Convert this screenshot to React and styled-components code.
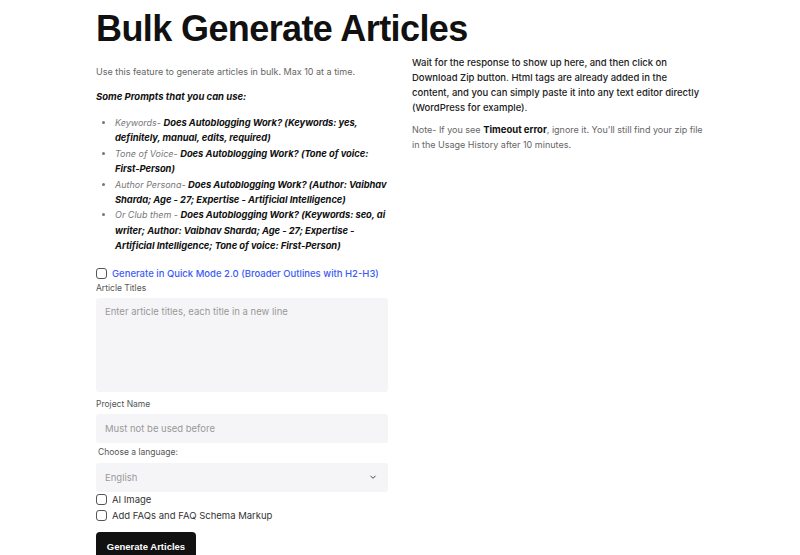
import React from "react";
import styled, { createGlobalStyle } from "styled-components";

const GlobalStyle = createGlobalStyle`
  html, body {
    margin: 0;
    padding: 0;
    background: #ffffff;
  }
  body {
    font-family: Inter, "Noto Sans", sans-serif;
    color: #222;
  }
  * {
    box-sizing: border-box;
  }
`;

const Page = styled.div`
  width: 608px;
  margin: 0 auto;
  padding-top: 7px;
`;

const Title = styled.h1`
  margin: 0;
  font-family: "Liberation Sans", Arial, sans-serif;
  font-size: 36px;
  font-weight: 700;
  letter-spacing: -0.6px;
  line-height: 44px;
  color: #111;
`;

const Columns = styled.div`
  display: grid;
  grid-template-columns: 292px 292px;
  column-gap: 24px;
  align-items: start;
`;

const Column = styled.div`
  display: flex;
  flex-direction: column;
`;

const Text = styled.p`
  margin: ${(p) => p.$margin || "0"};
  font-size: ${(p) => (p.$dark ? "9.5px" : "9px")};
  line-height: 15px;
  color: ${(p) => (p.$dark ? "#222" : "#666")};
  font-weight: ${(p) => (p.$dark ? 500 : 400)};
  font-style: ${(p) => (p.$italic ? "italic" : "normal")};
`;

const Strong = styled.strong`
  font-weight: 700;
  font-size: 9.5px;
  color: #111;
`;

const PromptList = styled.ul`
  margin: 11px 0 12px;
  padding-left: 19px;
  font-size: 9px;
  line-height: 15.4px;
  font-style: italic;
`;

const PromptItem = styled.li`
  color: #777;
  strong {
    color: #111;
    font-size: 9.4px;
    letter-spacing: -0.05px;
  }
`;

const CheckRow = styled.label`
  display: flex;
  align-items: center;
  gap: 5px;
  height: 16px;
  font-size: 9.5px;
  color: ${(p) => (p.$accent ? "#3d5cf5" : "#333")};
  font-weight: ${(p) => (p.$accent ? 500 : 400)};
`;

const Box = styled.span`
  width: 11px;
  height: 11px;
  border: 1px solid #555;
  border-radius: 3px;
  flex-shrink: 0;
`;

const FieldLabel = styled.div`
  font-size: 8.5px;
  line-height: 12px;
  color: #555;
  margin: ${(p) => p.$margin || "0"};
  padding-left: ${(p) => (p.$indent ? "2px" : "0")};
`;

const TextArea = styled.div`
  height: 94px;
  background: #f5f5f7;
  border-radius: 3px;
  padding: 8px 9px;
  font-size: 9.5px;
  color: #999;
  margin-top: 4px;
`;

const Input = styled.div`
  height: 29px;
  background: #f5f5f7;
  border-radius: 3px;
  padding: 0 9px;
  display: flex;
  align-items: center;
  justify-content: space-between;
  font-size: 9.5px;
  color: #999;
  margin-top: ${(p) => p.$gap || "4px"};
`;

const Chevron = styled.svg`
  width: 8px;
  height: 8px;
  margin-right: 2px;
`;

const Checks = styled.div`
  display: flex;
  flex-direction: column;
  margin-top: 0;
`;

const Button = styled.button`
  margin-top: 8px;
  width: 100px;
  height: 30px;
  background: #111;
  color: #fff;
  border: none;
  border-radius: 4px;
  font-family: "Liberation Sans", Arial, sans-serif;
  font-size: 9.5px;
  font-weight: 700;
  align-self: flex-start;
  padding-bottom: 2px;
`;

export default function App() {
  return (
    <>
      <GlobalStyle />
      <Page>
        <Title>Bulk Generate Articles</Title>
        <Columns>
          <Column>
            <Text $margin="13px 0 0">
              Use this feature to generate articles in bulk. Max 10 at a time.
            </Text>
            <Text $margin="10px 0 0" $italic>
              <Strong>Some Prompts that you can use:</Strong>
            </Text>
            <PromptList>
              <PromptItem>
                Keywords- <strong>Does Autoblogging Work? (Keywords: yes, definitely, manual, edits, required)</strong>
              </PromptItem>
              <PromptItem>
                Tone of Voice- <strong>Does Autoblogging Work? (Tone of voice: First-Person)</strong>
              </PromptItem>
              <PromptItem>
                Author Persona- <strong>Does Autoblogging Work? (Author: Vaibhav Sharda; Age - 27; Expertise - Artificial Intelligence)</strong>
              </PromptItem>
              <PromptItem>
                Or Club them - <strong>Does Autoblogging Work? (Keywords: seo, ai writer; Author: Vaibhav Sharda; Age - 27; Expertise - Artificial Intelligence; Tone of voice: First-Person)</strong>
              </PromptItem>
            </PromptList>
            <CheckRow $accent>
              <Box />
              Generate in Quick Mode 2.0 (Broader Outlines with H2-H3)
            </CheckRow>
            <FieldLabel>Article Titles</FieldLabel>
            <TextArea>Enter article titles, each title in a new line</TextArea>
            <FieldLabel $margin="6px 0 0">Project Name</FieldLabel>
            <Input>Must not be used before</Input>
            <FieldLabel $margin="3px 0 0" $indent>
              Choose a language:
            </FieldLabel>
            <Input $gap="5px">
              English
              <Chevron viewBox="0 0 8 8">
                <path d="M1.5 2.8 L4 5.3 L6.5 2.8" fill="none" stroke="#444" strokeWidth="1" />
              </Chevron>
            </Input>
            <Checks>
              <CheckRow>
                <Box />
                AI Image
              </CheckRow>
              <CheckRow>
                <Box />
                Add FAQs and FAQ Schema Markup
              </CheckRow>
            </Checks>
            <Button>Generate Articles</Button>
          </Column>
          <Column>
            <Text $dark $margin="4px 0 0">
              Wait for the response to show up here, and then click on Download Zip button. Html tags are already added in the content, and you can simply paste it into any text editor directly (WordPress for example).
            </Text>
            <Text $margin="7px 0 0">
              Note- If you see <Strong>Timeout error</Strong>, ignore it. You'll still find your zip file in the Usage History after 10 minutes.
            </Text>
          </Column>
        </Columns>
      </Page>
    </>
  );
}
